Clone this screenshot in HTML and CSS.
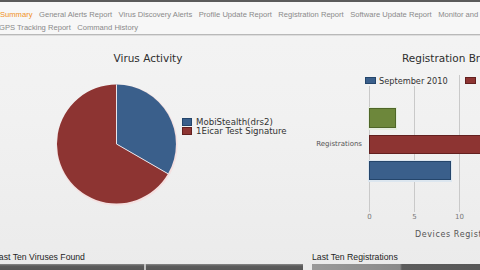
FILE: index.html
```html
<!DOCTYPE html>
<html>
<head>
<meta charset="utf-8">
<link rel="stylesheet" href="styles.css">
</head>
<body>
<div class="topline"></div>
<nav class="nav">
  <div class="nav-row">
    <a class="nav-item active">Summary</a>
    <a class="nav-item">General Alerts Report</a>
    <a class="nav-item">Virus Discovery Alerts</a>
    <a class="nav-item">Profile Update Report</a>
    <a class="nav-item">Registration Report</a>
    <a class="nav-item">Software Update Report</a>
    <a class="nav-item">Monitor and Control</a>
  </div>
  <div class="nav-row">
    <a class="nav-item first-cut">GPS Tracking Report</a>
    <a class="nav-item">Command History</a>
  </div>
</nav>
<main class="charts">
  <section class="panel panel-left">
    <svg class="chart" width="305" height="215" viewBox="0 0 305 215">
      <text class="chart-title" x="148" y="27" text-anchor="middle">Virus Activity</text>
      <circle cx="117" cy="110" r="60.5" fill="#f6dada" opacity="0.7"/>
      <path d="M116.5,109 L168,138.75 A59.5,59.5 0 1 1 116.5,49.5 Z" fill="#8d3432"/>
      <path d="M116.5,109 L116.5,49.5 A59.5,59.5 0 0 1 168,138.75 Z" fill="#3a5f8b"/>
      <path d="M116.5,109 L116.5,49.5 M116.5,109 L168,138.75" stroke="#e9e4ea" stroke-width="1"/>
      <rect x="182.5" y="83.5" width="9" height="7" fill="#3a5f8b" stroke="#24456b"/>
      <text class="legend legend-pie" x="196" y="90">MobiStealth(drs2)</text>
      <rect x="182.5" y="92.5" width="9" height="7" fill="#8d3432" stroke="#63201f"/>
      <text class="legend legend-pie" x="196" y="99">1Eicar Test Signature</text>
    </svg>
  </section>
  <section class="panel panel-right">
    <svg class="chart" width="175" height="215" viewBox="0 0 175 215">
      <text class="chart-title" x="97" y="27">Registration Breakdown</text>
      <rect x="60.5" y="42.5" width="10" height="6" fill="#3a5f8b" stroke="#24456b"/>
      <text class="legend legend-bar" x="74" y="49">September 2010</text>
      <rect x="160.5" y="42.5" width="10" height="6" fill="#8d3432" stroke="#63201f"/>
      <line x1="64.5" y1="51" x2="64.5" y2="177" class="grid"/>
      <line x1="109.5" y1="51" x2="109.5" y2="177" class="grid"/>
      <line x1="154.5" y1="40" x2="154.5" y2="177" class="grid"/>
      <rect x="63" y="72" width="29" height="23" fill="#e6ede0"/>
      <rect x="64.5" y="73.5" width="26" height="19" fill="#6d873b" stroke="#4f6628"/>
      <rect x="64.5" y="100.5" width="120" height="18" fill="#8d3432" stroke="#63201f"/>
      <rect x="63" y="125" width="84" height="22" fill="#dce6ef"/>
      <rect x="64.5" y="126.5" width="81" height="18" fill="#3a5f8b" stroke="#24456b"/>
      <text class="axis-label" x="57" y="111" text-anchor="end">Registrations</text>
      <text class="tick" x="64.5" y="184" text-anchor="middle">0</text>
      <text class="tick" x="109.5" y="184" text-anchor="middle">5</text>
      <text class="tick" x="154.5" y="184" text-anchor="middle">10</text>
      <text class="axis-title" x="110" y="202">Devices Registered</text>
    </svg>
  </section>
</main>
<div class="lists">
  <section class="list">
    <h2 class="list-title cut">Last Ten Viruses Found</h2>
    <div class="list-bar"><span class="divider"></span></div>
  </section>
  <section class="list">
    <h2 class="list-title">Last Ten Registrations</h2>
    <div class="list-bar light-top"></div>
  </section>
</div>
</body>
</html>
```
FILE: styles.css
```css
html, body {
  margin: 0;
  padding: 0;
  width: 480px;
  height: 270px;
  overflow: hidden;
}
body {
  background: linear-gradient(#f4f4f4 0px, #f1f1f1 120px, #ebebeb 270px);
  font-family: "Liberation Sans", Arial, sans-serif;
}
.topline {
  height: 2px;
  background: #5b5b5b;
}
.nav {
  padding: 6px 0 0 0;
  height: 26px;
  background: #f7f7f7;
  border-bottom: 1px solid #b9b9b9;
  box-shadow: 0 1px 0 #dedede;
}
.nav-row {
  display: flex;
  gap: 6.5px;
  height: 13px;
  line-height: 13px;
  white-space: nowrap;
  font-size: 7.6px;
}
.nav-item {
  color: #8a8a8a;
}
.nav-item.active {
  color: #f0901c;
}
.nav-item.first-cut {
  margin-left: -1px;
}
.charts {
  display: grid;
  grid-template-columns: 305px 175px;
  height: 215px;
}
.panel {
  overflow: visible;
}
.chart {
  display: block;
  overflow: visible;
}
.chart-title {
  font-family: "DejaVu Sans", sans-serif;
  font-size: 10.5px;
  fill: #2e2e2e;
}
.legend {
  font-family: "DejaVu Sans", sans-serif;
  fill: #333;
}
.legend-pie {
  font-size: 8.6px;
}
.legend-bar {
  font-size: 8.2px;
}
.grid {
  stroke: #c9c9c9;
  stroke-width: 1;
}
.axis-label {
  font-family: "DejaVu Sans", sans-serif;
  font-size: 7px;
  fill: #555;
}
.tick {
  font-family: "DejaVu Sans", sans-serif;
  font-size: 7px;
  fill: #777;
}
.axis-title {
  font-family: "DejaVu Sans", sans-serif;
  font-size: 8px;
  letter-spacing: 0.6px;
  fill: #555;
}
.lists {
  display: grid;
  grid-template-columns: 303px 168px;
  gap: 9px;
}
.list-title {
  margin: 0;
  height: 14px;
  line-height: 15px;
  font-size: 8.7px;
  font-weight: normal;
  color: #1e1e1e;
  white-space: nowrap;
}
.list-title.cut {
  margin-left: -6px;
}
.list-bar {
  position: relative;
  height: 8px;
  background: linear-gradient(#8a8a8a 0px, #5c5c5c 2px, #555 8px);
}
.list-bar.light-top {
  background: linear-gradient(90deg, #9a9a9a 0px, #8a8a8a 88px, #5c5c5c 90px, #585858 100%);
}
.divider {
  position: absolute;
  left: 144px;
  top: 0;
  width: 2px;
  height: 8px;
  background: #c4c4c4;
}
```
